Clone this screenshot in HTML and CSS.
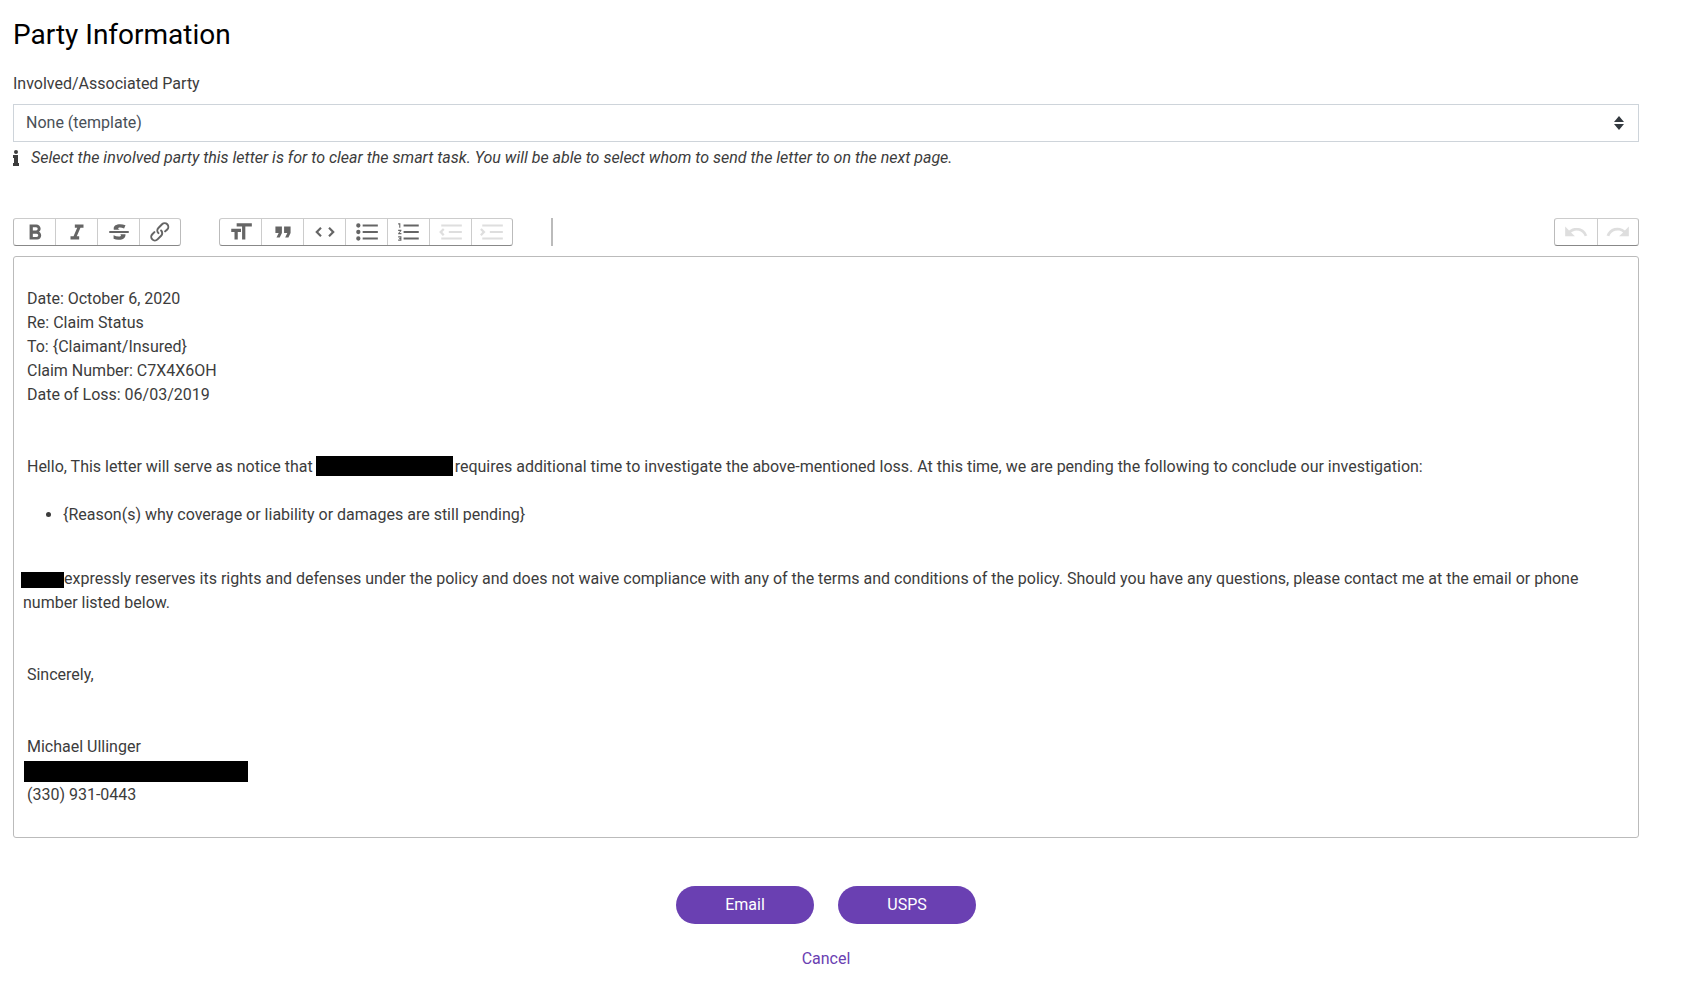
FILE: index.html
```
<!DOCTYPE html>
<html lang="en">
<head>
<meta charset="utf-8">
<title>Party Information</title>
<link rel="stylesheet" href="styles.css">
</head>
<body>
<main class="page">
  <h1 class="title">Party Information</h1>
  <form class="form">
    <label class="label" for="party">Involved/Associated Party</label>
    <div class="select-wrap">
      <select class="select" id="party"><option>None (template)</option></select>
      <svg class="caret" viewBox="0 0 10 14" aria-hidden="true"><path d="M0 6 5 0l5 6zM0 8h10l-5 6z"/></svg>
    </div>
    <p class="help">
      <svg class="info" viewBox="0 0 6 16" aria-hidden="true"><circle cx="3" cy="2" r="2"/><path d="M0 5h5v8h1v3H0v-3h1V8H0z"/></svg>
      <em class="help-text">Select the involved party this letter is for to clear the smart task. You will be able to select whom to send the letter to on the next page.</em>
    </p>

    <div class="toolbar" role="toolbar" aria-label="Formatting">
      <div class="group">
        <button type="button" class="tool" aria-label="Bold"><svg viewBox="0 0 24 24"><path d="M15.6 11.8c1-.7 1.6-1.8 1.6-2.8a4 4 0 0 0-4-4H7v14h7c2.1 0 3.7-1.7 3.7-3.8 0-1.5-.8-2.8-2.1-3.4zM10 7.5h3a1.5 1.5 0 1 1 0 3h-3v-3zm3.5 9H10v-3h3.5a1.5 1.5 0 1 1 0 3z"/></svg></button>
        <button type="button" class="tool" aria-label="Italic"><svg viewBox="0 0 24 24"><path d="M10 5v3h2.2l-3.4 8H6v3h8v-3h-2.2l3.4-8H18V5h-8z"/></svg></button>
        <button type="button" class="tool" aria-label="Strikethrough"><svg viewBox="0 0 24 24"><path d="M12.73 14l.28.14c.26.15.45.3.57.44.12.14.18.3.18.5 0 .3-.15.56-.44.75-.3.2-.76.3-1.39.3A13.52 13.52 0 0 1 7 14.95v3.37a10.64 10.64 0 0 0 4.84.88c1.26 0 2.35-.19 3.28-.56.93-.37 1.64-.9 2.14-1.57s.74-1.45.74-2.32c0-.26-.02-.51-.06-.75h-5.21zm-5.5-4c-.08-.34-.12-.7-.12-1.1 0-1.29.52-2.3 1.58-3.02 1.05-.72 2.5-1.08 4.34-1.08 1.62 0 3.28.34 4.97 1l-1.3 2.93c-1.47-.6-2.73-.9-3.8-.9-.55 0-.96.08-1.2.26-.26.17-.38.38-.38.64 0 .27.16.52.48.74.17.12.53.3 1.05.53H7.23zM3 13h18v-2H3v2z"/></svg></button>
        <button type="button" class="tool" aria-label="Link"><svg viewBox="0 0 24 24"><path d="M9.88 13.7a4.3 4.3 0 0 1 0-6.07l3.37-3.37a4.26 4.26 0 0 1 6.07 0 4.3 4.3 0 0 1 0 6.06l-1.96 1.72a.91.91 0 1 1-1.3-1.3l1.97-1.71a2.46 2.46 0 0 0-3.48-3.48l-3.38 3.37a2.46 2.46 0 0 0 0 3.48.91.91 0 1 1-1.3 1.3z"/><path d="M4.25 19.46a4.3 4.3 0 0 1 0-6.07l1.93-1.9a.91.91 0 1 1 1.3 1.3l-1.93 1.9a2.46 2.46 0 0 0 3.48 3.48l3.37-3.38c.96-.96.96-2.52 0-3.48a.91.91 0 1 1 1.3-1.3 4.3 4.3 0 0 1 0 6.07l-3.38 3.38a4.26 4.26 0 0 1-6.07 0z"/></svg></button>
      </div>
      <div class="group">
        <button type="button" class="tool" aria-label="Heading"><svg viewBox="0 0 24 24"><path d="M12 9v3H9v7H6v-7H3V9h9zM8 4h14v3h-6v12h-3V7H8V4z"/></svg></button>
        <button type="button" class="tool" aria-label="Quote"><svg viewBox="0 0 24 24"><path d="M6 17h3l2-4V7H5v6h3zm8 0h3l2-4V7h-6v6h3z"/></svg></button>
        <button type="button" class="tool" aria-label="Code"><svg viewBox="0 0 24 24"><path d="M18.2 12L15 15.2l1.4 1.4L21 12l-4.6-4.6L15 8.8l3.2 3.2zM5.8 12L9 8.8 7.6 7.4 3 12l4.6 4.6L9 15.2 5.8 12z"/></svg></button>
        <button type="button" class="tool" aria-label="Bullets"><svg viewBox="0 0 24 24"><path d="M4 4a2 2 0 1 0 0 4 2 2 0 0 0 0-4zm0 6a2 2 0 1 0 0 4 2 2 0 0 0 0-4zm0 6a2 2 0 1 0 0 4 2 2 0 0 0 0-4zm4 3h14v-2H8v2zm0-6h14v-2H8v2zm0-8v2h14V5H8z"/></svg></button>
        <button type="button" class="tool" aria-label="Numbers"><svg viewBox="0 0 24 24"><path d="M2 17h2v.5H3v1h1v.5H2v1h3v-4H2v1zm1-9h1V4H2v1h1v3zm-1 3h1.8L2 13.1v.9h3v-1H3.2L5 10.9V10H2v1zm5-6v2h14V5H7zm0 14h14v-2H7v2zm0-6h14v-2H7v2z"/></svg></button>
        <button type="button" class="tool" aria-label="Decrease level" disabled><svg viewBox="0 0 24 24"><path d="M3 19h19v-2H3v2zm7-6h12v-2H10v2zm-8.3-.3l2.8 2.9L6 14.2 4 12l2-2-1.4-1.5L1 12l.7.7zM3 5v2h19V5H3z"/></svg></button>
        <button type="button" class="tool" aria-label="Increase level" disabled><svg viewBox="0 0 24 24"><path d="M3 19h19v-2H3v2zm7-6h12v-2H10v2zm-6.9-1L1 14.2l1.4 1.4L6 12l-.7-.7-2.8-2.8L1 9.9 3.1 12zM3 5v2h19V5H3z"/></svg></button>
      </div>
      <div class="divider"></div>
      <div class="group group-history">
        <button type="button" class="tool" aria-label="Undo" disabled><svg viewBox="0 0 24 24"><path d="M12.5 8c-2.6 0-5 1-6.9 2.6L2 7v9h9l-3.6-3.6A8 8 0 0 1 20 16l2.4-.8a10.5 10.5 0 0 0-10-7.2z"/></svg></button>
        <button type="button" class="tool" aria-label="Redo" disabled><svg viewBox="0 0 24 24"><path d="M18.4 10.6a10.5 10.5 0 0 0-16.9 4.6L4 16a8 8 0 0 1 12.7-3.6L13 16h9V7l-3.6 3.6z"/></svg></button>
      </div>
    </div>

    <div class="editor" contenteditable="true" role="textbox" aria-multiline="true" aria-label="Letter">
      <div><br>&nbsp;Date: October 6, 2020<br>&nbsp;Re: Claim Status<br>&nbsp;To: {Claimant/Insured}<br>&nbsp;Claim Number: C7X4X6OH<br>&nbsp;Date of Loss: 06/03/2019<br><br><br>&nbsp;Hello, This letter will serve as notice that<span class="redacted redacted-company"></span>requires additional time to investigate the above-mentioned loss. At this time, we are pending the following to conclude our investigation:<br><br></div>
      <ul class="reasons"><li>{Reason(s) why coverage or liability or damages are still pending}</li></ul>
      <div><br><span class="redacted redacted-name"></span>expressly reserves its rights and defenses under the policy and does not waive compliance with any of the terms and conditions of the policy. Should you have any questions, please contact me at the email or phone number listed below.<br><br><br>&nbsp;Sincerely,<br><br><br>&nbsp;Michael Ullinger<br><span class="redacted redacted-email"></span><br>&nbsp;(330) 931-0443<br><br></div>
    </div>

    <div class="actions">
      <button type="button" class="button">Email</button>
      <button type="button" class="button">USPS</button>
    </div>
    <a class="cancel" href="#">Cancel</a>
  </form>
</main>
</body>
</html>
```
FILE: styles.css
```
* {
  box-sizing: border-box;
}

body {
  margin: 0;
  background: #fff;
  color: #3c3c3c;
  font: 16px/24px Roboto, "Liberation Sans", sans-serif;
}

.page {
  padding: 18px 65px 12px 13px;
}

.title {
  margin: 0 0 20px;
  color: #000;
  font-size: 28px;
  font-weight: 400;
  line-height: 34px;
}

.form {
  display: flex;
  flex-direction: column;
}

.label {
  margin-bottom: 8px;
}

.select-wrap {
  position: relative;
}

.select {
  display: block;
  width: 100%;
  height: 38px;
  padding: 0 12px;
  appearance: none;
  border: 1px solid #ced4da;
  border-radius: 0;
  background: #fff;
  color: #495057;
  font: inherit;
}

.caret {
  position: absolute;
  top: 12px;
  right: 14px;
  width: 12px;
  height: 14px;
  fill: #343a40;
  pointer-events: none;
}

.help {
  display: flex;
  align-items: center;
  gap: 12px;
  margin: 4px 0 48px;
}

.help-text {
  font-style: oblique 14deg;
}

.info {
  width: 6px;
  height: 16px;
  fill: #3c3c3c;
}

.toolbar {
  display: flex;
  gap: 38px;
  margin-bottom: 10px;
}

.group {
  display: flex;
  border: 1px solid #bbb;
  border-top-color: #ccc;
  border-bottom-color: #888;
  border-radius: 3px;
}

.tool {
  display: flex;
  align-items: center;
  justify-content: center;
  width: 42px;
  height: 26px;
  padding: 0;
  border: 0;
  border-left: 1px solid #ccc;
  background: none;
}

.tool:first-child {
  width: 41px;
  border-left: 0;
}

.tool:last-child {
  width: 41px;
}

.group-history {
  margin-left: auto;
}

.group-history .tool:first-child {
  width: 42px;
}

.tool svg {
  width: 26px;
  height: 26px;
  opacity: 0.6;
}

.tool:disabled svg {
  opacity: 0.125;
}

.divider {
  width: 2px;
  background: #bbb;
}

.editor {
  padding: 6px 9px;
  border: 1px solid #bbb;
  border-radius: 3px;
}

.reasons {
  margin: 0 0 16px;
  padding-left: 40px;
}

.redacted {
  display: inline-block;
  background: #000;
  vertical-align: middle;
}

.redacted-company {
  width: 137px;
  height: 20px;
  margin: 0 2px 0 3px;
  vertical-align: text-bottom;
}

.redacted-name {
  width: 43px;
  height: 16px;
  margin-left: -2px;
}

.redacted-email {
  width: 224px;
  height: 21px;
  margin-left: 1px;
}

.actions {
  display: flex;
  justify-content: center;
  gap: 24px;
  margin: 48px 0 23px;
}

.button {
  width: 138px;
  height: 38px;
  border: 0;
  border-radius: 19px;
  background: #6a40b2;
  color: #fff;
  font: inherit;
}

.cancel {
  align-self: center;
  color: #6a40b2;
  text-decoration: none;
}
```
